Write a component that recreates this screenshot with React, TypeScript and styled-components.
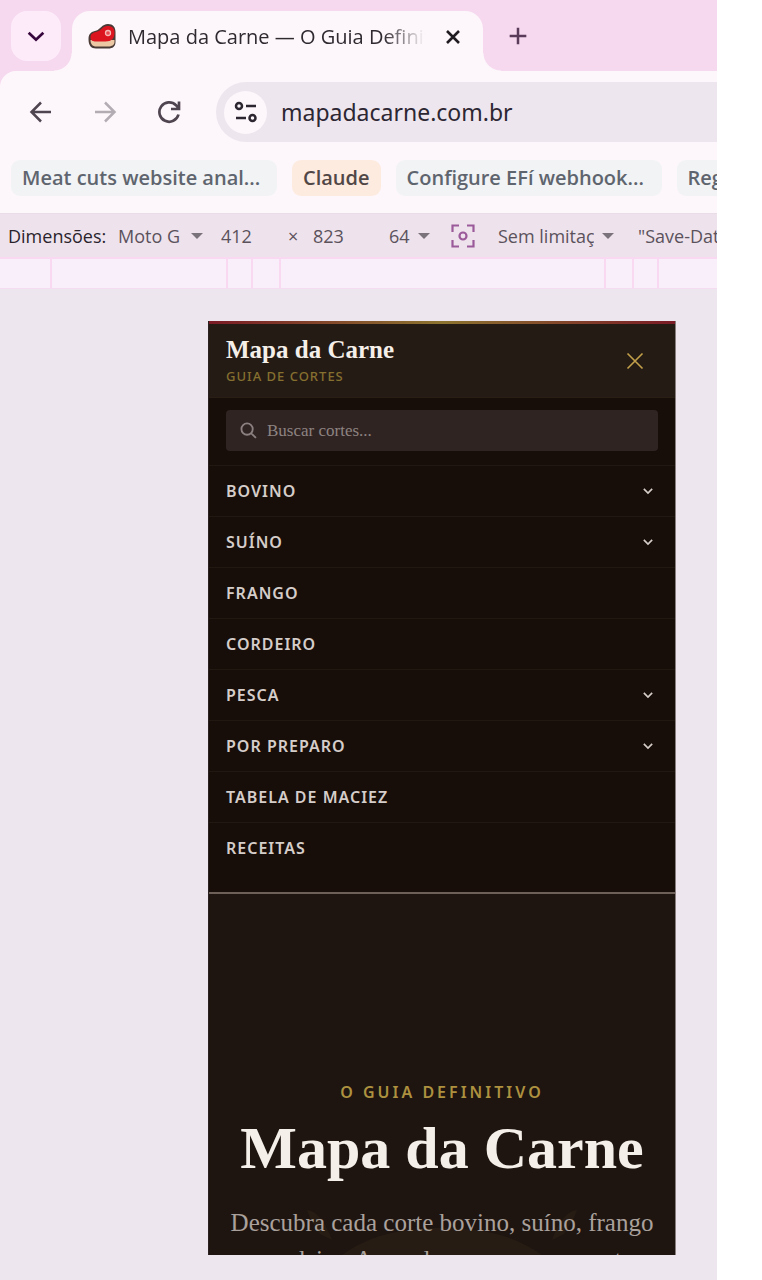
import React from "react";
import styled, { createGlobalStyle, css } from "styled-components";

const GlobalStyle = createGlobalStyle`
  * { box-sizing: border-box; }
  body { margin: 0; background: #ffffff; font-family: "Noto Sans", "Open Sans", sans-serif; }
  button, input, select { font: inherit; color: inherit; margin: 0; }
  button { padding: 0; border: 0; background: none; display: flex; align-items: center; justify-content: center; }
  svg { display: block; }
`;

const serif = css`font-family: "Liberation Serif", serif;`;

const Browser = styled.div`
  min-height: 100vh;
  margin-right: 45px;
  background: #eee6ee;
  display: flex;
  flex-direction: column;
  overflow: hidden;
`;

const TabStrip = styled.header`
  height: 71px;
  display: flex;
  align-items: flex-end;
  background: #f6d9ef;
`;

const TabSearch = styled.button`
  width: 50px;
  height: 50px;
  margin: 0 11px 10px;
  border-radius: 16px;
  background: #fdebfa;
  color: #36063c;
`;

const Tab = styled.div`
  position: relative;
  width: 411px;
  height: 60px;
  padding: 0 18px 9px 16px;
  display: flex;
  align-items: center;
  border-radius: 18px 18px 0 0;
  background: #fdf7fb;
  &::before, &::after {
    content: "";
    position: absolute;
    bottom: 0;
    width: 18px;
    height: 18px;
  }
  &::before { left: -18px; background: radial-gradient(circle at 0 0, transparent 17px, #fdf7fb 18px); }
  &::after { right: -18px; background: radial-gradient(circle at 100% 0, transparent 17px, #fdf7fb 18px); }
`;

const TabTitle = styled.span`
  flex: 1;
  min-width: 0;
  margin: 0 16px 0 12px;
  overflow: hidden;
  white-space: nowrap;
  font-family: "Open Sans", sans-serif;
  font-size: 20px;
  line-height: 30px;
  color: #2f2a30;
  mask-image: linear-gradient(to right, #000 86%, transparent);
`;

const TabClose = styled.button`
  width: 24px;
  height: 24px;
  color: #1f1b20;
`;

const NewTab = styled.button`
  width: 36px;
  height: 36px;
  margin: 0 0 17px 17px;
  color: #5a3c5a;
`;

const Toolbar = styled.div`
  display: flex;
  align-items: center;
  padding: 11px 0 0 24px;
  background: #fdf7fb;
  border-radius: 16px 0 0 0;
`;

const ToolbarBack = styled.div`background: #f6d9ef;`;

const NavButton = styled.button<{ $dim?: boolean }>`
  width: 34px;
  height: 34px;
  margin-right: 30px;
  color: ${(p) => (p.$dim ? "#b3acb2" : "#4f4550")};
`;

const AddressBar = styled.form`
  flex: 1;
  min-width: 0;
  height: 60px;
  padding-left: 8px;
  display: flex;
  align-items: center;
  gap: 14px;
  border-radius: 30px 0 0 30px;
  background: #eee6ee;
`;

const SiteInfo = styled.button`
  flex: none;
  width: 43px;
  height: 43px;
  border-radius: 50%;
  background: #fdf7fb;
  color: #2c2630;
`;

const Address = styled.input`
  flex: 1;
  min-width: 0;
  padding: 0;
  border: 0;
  outline: 0;
  background: transparent;
  font-size: 23px;
  line-height: 32px;
  color: #2c2733;
`;

const Bookmarks = styled.nav`
  height: 71px;
  padding: 18px 0 0 11px;
  display: flex;
  gap: 15px;
  background: #fdf7fb;
`;

const Bookmark = styled.a<{ $warm?: boolean; $wide?: boolean }>`
  flex: none;
  height: 36px;
  min-width: ${(p) => (p.$wide ? "266px" : "0")};
  padding: 0 11px;
  border-radius: 9px;
  background: ${(p) => (p.$warm ? "#fdebe0" : "#f1f3f5")};
  color: ${(p) => (p.$warm ? "#514746" : "#5f656e")};
  font-family: "Open Sans", sans-serif;
  font-weight: 600;
  font-size: 20px;
  line-height: 36px;
  text-decoration: none;
  white-space: nowrap;
`;

const DeviceBar = styled.div`
  height: 44px;
  padding-left: 8px;
  display: flex;
  align-items: center;
  overflow: hidden;
  white-space: nowrap;
  background: #eee3ec;
  border-top: 1px solid #e9dde7;
  font-family: "Open Sans", sans-serif;
  font-size: 18px;
  line-height: 26px;
  color: #5b525c;
`;

const DeviceLabel = styled.label`
  flex: none;
  width: 110px;
  color: #2b232c;
`;

const DeviceSelect = styled.select<{ $width: number }>`
  appearance: none;
  flex: none;
  width: ${(p) => p.$width}px;
  padding: 0 8px 0 0;
  border: 0;
  outline: 0;
  background: transparent;
`;

const SizeInput = styled.input<{ $width: number }>`
  flex: none;
  width: ${(p) => p.$width}px;
  padding: 0;
  border: 0;
  outline: 0;
  background: transparent;
`;

const Times = styled.span`
  flex: none;
  width: 25px;
`;

const Caret = styled.span<{ $gap: number }>`
  flex: none;
  margin-right: ${(p) => p.$gap}px;
  border: 6px solid transparent;
  border-top-color: #7b737c;
  border-bottom: 0;
`;

const FocusButton = styled.button`
  flex: none;
  width: 26px;
  height: 26px;
  margin-right: 22px;
  color: #9b5a9a;
`;

const Ruler = styled.div`
  height: 32px;
  display: flex;
  background: #f9effb;
  border-top: 2px solid #f8d9f1;
  border-bottom: 1px solid #f6dcf1;
`;

const RulerCell = styled.div<{ $width?: number }>`
  flex: ${(p) => (p.$width ? `none` : 1)};
  width: ${(p) => p.$width ?? 0}px;
  border-right: ${(p) => (p.$width ? 2 : 0)}px solid #f8d9f1;
`;

const Stage = styled.div`
  flex: 1;
  padding: 32px 41px 25px 208px;
  display: flex;
`;

const Device = styled.section`
  flex: 1;
  min-width: 0;
  display: flex;
  flex-direction: column;
  border-left: 1px solid #2a2120;
  border-right: 1px solid #8a7f7f;
  background: #1d1410;
  color: #d8d0cc;
`;

const SiteHeader = styled.div`
  height: 76px;
  padding: 0 28px 0 17px;
  display: flex;
  align-items: center;
  justify-content: space-between;
  border-top: 3px solid;
  border-image: linear-gradient(to right, #7a1a25, #8c7430 50%, #7a1a25) 1;
  background: #251b15;
`;

const Brand = styled.a`
  display: flex;
  flex-direction: column;
  text-decoration: none;
`;

const BrandName = styled.span`
  ${serif}
  font-weight: 700;
  font-size: 25px;
  line-height: 30px;
  color: #f5efe9;
`;

const BrandTag = styled.span`
  font-size: 13px;
  line-height: 22px;
  font-weight: 500;
  letter-spacing: 1px;
  color: #85702f;
`;

const MenuClose = styled.button`
  width: 24px;
  height: 24px;
  color: #c2a04a;
`;

const SearchWrap = styled.div`
  padding: 12px 17px 14px;
  border-top: 1px solid #2a1f14;
  background: #180e09;
`;

const SearchField = styled.label`
  height: 41px;
  padding: 0 14px;
  display: flex;
  align-items: center;
  gap: 10px;
  border-radius: 4px;
  background: #302423;
  color: #8b8180;
`;

const SearchInput = styled.input`
  ${serif}
  flex: 1;
  min-width: 0;
  padding: 0;
  border: 0;
  outline: 0;
  background: transparent;
  font-size: 17px;
  line-height: 24px;
  &::placeholder { color: #8d8381; opacity: 1; }
`;

const Menu = styled.nav`
  padding-bottom: 19px;
  background: #180e09;
  border-bottom: 2px solid #6c6058;
`;

const itemStyle = css`
  width: 100%;
  height: 51px;
  padding: 0 22px 0 17px;
  display: flex;
  align-items: center;
  justify-content: space-between;
  border-top: 1px solid #221812;
  font-size: 16px;
  line-height: 24px;
  font-weight: 600;
  letter-spacing: 1px;
  color: #d5cdc9;
  text-decoration: none;
`;

const MenuButton = styled.button`${itemStyle}`;
const MenuLink = styled.a`${itemStyle}`;

const Hero = styled.div`
  position: relative;
  flex: 1;
  padding: 186px 20px 0;
  overflow: hidden;
  text-align: center;
  background: #1e1511;
`;

const HeroArt = styled.svg`
  position: absolute;
  left: 50%;
  bottom: 0;
  transform: translateX(-50%);
`;

const Eyebrow = styled.p`
  position: relative;
  margin: 0 0 16px;
  font-size: 16px;
  line-height: 24px;
  font-weight: 600;
  letter-spacing: 3px;
  color: #ad913f;
`;

const Title = styled.h1`
  ${serif}
  position: relative;
  margin: 0 0 28px;
  font-size: 60px;
  line-height: 56px;
  white-space: nowrap;
  color: #f5efe9;
`;

const Lead = styled.p`
  ${serif}
  position: relative;
  margin: 0;
  height: 51px;
  font-size: 25px;
  line-height: 37px;
  color: #aaa19c;
`;

const menu = [
  { name: "BOVINO", open: true },
  { name: "SUÍNO", open: true },
  { name: "FRANGO" },
  { name: "CORDEIRO" },
  { name: "PESCA", open: true },
  { name: "POR PREPARO", open: true },
  { name: "TABELA DE MACIEZ" },
  { name: "RECEITAS" },
];

const ruler = [52, 176, 25, 28, 325, 28, 25];

type StrokeProps = { size: number; box?: number; width?: number; d: string };

const Stroke = ({ size, box = 24, width = 2, d }: StrokeProps) => (
  <svg width={size} height={size} viewBox={`0 0 ${box} ${box}`} fill="none" stroke="currentColor" strokeWidth={width} aria-hidden="true">
    <path d={d} />
  </svg>
);

const Steak = () => (
  <svg width="28" height="28" viewBox="0 0 28 28" aria-hidden="true">
    <path d="M0.500 16C0.500 10 4 8.500 8.500 7.500 12 6.500 14 1 20 1c5 0 7.500 3 7.500 8v10c0 4.500-3 6.500-7 6.500H8c-5 0-7.500-3-7.500-9.500Z" fill="#4a3a36" />
    <path d="M2.500 17h24v2c0 3-3 4.500-6 4.500H8C5 23.500 2.500 21.500 2.500 17Z" fill="#ecc9a4" />
    <path d="M2.500 14.500c0-4 3-5 7-6s5-5.500 10-5.500c5 0 7 2.500 7 6.500 0 6-3 9-9 9H8c-3 0-5.500-1-5.500-4Z" fill="#dc1420" />
    <circle cx="20" cy="10" r="2.500" fill="#e64a50" stroke="#f6b8b4" strokeWidth="1.300" />
  </svg>
);

export default function App() {
  return (
    <>
      <GlobalStyle />
      <Browser>
        <TabStrip>
          <TabSearch aria-label="Pesquisar guias">
            <Stroke size={22} width={3} d="M4 8.500l8 7.500 8-7.500" />
          </TabSearch>
          <Tab>
            <Steak />
            <TabTitle>Mapa da Carne — O Guia Definitivo</TabTitle>
            <TabClose aria-label="Fechar guia">
              <Stroke size={18} width={3.500} d="M4 4l16 16M20 4L4 20" />
            </TabClose>
          </Tab>
          <NewTab aria-label="Nova guia">
            <Stroke size={20} width={3} d="M12 2v20M2 12h20" />
          </NewTab>
        </TabStrip>
        <ToolbarBack>
          <Toolbar>
            <NavButton aria-label="Voltar">
              <Stroke size={24} width={2.500} d="M22 12H3M12 2.500L2.500 12l9.500 9.500" />
            </NavButton>
            <NavButton aria-label="Avançar" $dim>
              <Stroke size={24} width={2.500} d="M2 12h19M12 2.500l9.500 9.500-9.500 9.500" />
            </NavButton>
            <NavButton aria-label="Recarregar">
              <Stroke size={24} width={2.700} d="M21.500 14.500A9.700 9.700 0 1 1 19 5.200L21.500 8M22 1.500V9h-8" />
            </NavButton>
            <AddressBar>
              <SiteInfo type="button" aria-label="Informações do site">
                <svg width="24" height="24" viewBox="0 0 24 24" fill="none" stroke="currentColor" strokeWidth="2.500" aria-hidden="true">
                  <circle cx="5" cy="6" r="3" />
                  <path d="M12 6h10M2 18h10" />
                  <circle cx="18.500" cy="18" r="3" />
                </svg>
              </SiteInfo>
              <Address aria-label="Endereço" defaultValue="mapadacarne.com.br" />
            </AddressBar>
          </Toolbar>
        </ToolbarBack>
        <Bookmarks aria-label="Favoritos">
          <Bookmark href="#meat" $wide>Meat cuts website anal...</Bookmark>
          <Bookmark href="#claude" $warm>Claude</Bookmark>
          <Bookmark href="#webhook" $wide>Configure EFí webhook...</Bookmark>
          <Bookmark href="#reg">Reg</Bookmark>
        </Bookmarks>
        <DeviceBar>
          <DeviceLabel htmlFor="device">Dimensões:</DeviceLabel>
          <DeviceSelect id="device" $width={73}><option>Moto G</option></DeviceSelect>
          <Caret $gap={18} />
          <SizeInput aria-label="Largura" defaultValue="412" $width={67} />
          <Times>×</Times>
          <SizeInput aria-label="Altura" defaultValue="823" $width={76} />
          <DeviceSelect aria-label="Zoom" $width={29}><option>64</option></DeviceSelect>
          <Caret $gap={20} />
          <FocusButton aria-label="Ajustar à janela">
            <svg width="24" height="24" viewBox="0 0 24 24" fill="none" stroke="currentColor" strokeWidth="2.200" aria-hidden="true">
              <path d="M1.500 8V1.500H8M16 1.500h6.500V8M22.500 16v6.500H16M8 22.500H1.500V16" />
              <circle cx="12" cy="12" r="3.500" />
            </svg>
          </FocusButton>
          <DeviceSelect aria-label="Limitação" $width={104}><option>Sem limitação</option></DeviceSelect>
          <Caret $gap={24} />
          <span>"Save-Data"</span>
        </DeviceBar>
        <Ruler>
          {ruler.map((w, i) => <RulerCell key={i} $width={w} />)}
          <RulerCell />
        </Ruler>
        <Stage>
          <Device>
            <SiteHeader>
              <Brand href="#home">
                <BrandName>Mapa da Carne</BrandName>
                <BrandTag>GUIA DE CORTES</BrandTag>
              </Brand>
              <MenuClose aria-label="Fechar menu">
                <Stroke size={20} width={2} d="M3 3l18 18M21 3L3 21" />
              </MenuClose>
            </SiteHeader>
            <SearchWrap>
              <SearchField>
                <Stroke size={17} width={2.600} d="M10 2a8 8 0 1 0 0 16a8 8 0 1 0 0-16M16 16l6.500 6.500" />
                <SearchInput aria-label="Buscar cortes" placeholder="Buscar cortes..." />
              </SearchField>
            </SearchWrap>
            <Menu>
              {menu.map((item) =>
                item.open ? (
                  <MenuButton key={item.name} aria-expanded={false}>
                    {item.name}
                    <Stroke size={10} width={4} d="M2 7l10 10L22 7" />
                  </MenuButton>
                ) : (
                  <MenuLink key={item.name} href="#cortes">{item.name}</MenuLink>
                ),
              )}
            </Menu>
            <Hero>
              <HeroArt width="300" height="48" viewBox="0 0 300 48" fill="#271c13" aria-hidden="true">
                <path d="M50 48c25-18 55-27 100-27s75 9 100 27ZM15 3c8 0 18 10 25 30l-12-6C22 18 18 12 15 3ZM285 3c-8 0-18 10-25 30l12-6c6-9 10-15 13-24Z" />
              </HeroArt>
              <Eyebrow>O GUIA DEFINITIVO</Eyebrow>
              <Title>Mapa da Carne</Title>
              <Lead>Descubra cada corte bovino, suíno, frango e cordeiro. Aprenda a usar como mestre</Lead>
            </Hero>
          </Device>
        </Stage>
      </Browser>
    </>
  );
}
